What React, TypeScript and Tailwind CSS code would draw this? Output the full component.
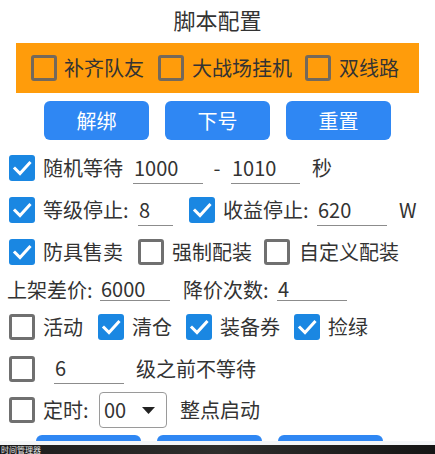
import React from "react";

const FONT = { fontFamily: '"Noto Sans CJK SC", "Noto Sans", sans-serif' };

function Box({ checked = false, orange = false, className = "" }: { checked?: boolean; orange?: boolean; className?: string }) {
  if (checked) {
    return (
      <div className={`w-[26px] h-[26px] rounded-[3px] bg-[#1a87e2] flex items-center justify-center shrink-0 ${className}`}>
        <svg width="26" height="26" viewBox="0 0 26 26">
          <path d="M6 13.5 L11 18.5 L20.5 8" stroke="white" strokeWidth="3" fill="none" strokeLinecap="square" />
        </svg>
      </div>
    );
  }
  return (
    <div
      className={`w-[26px] h-[26px] rounded-[3px] border-[3px] shrink-0 ${orange ? "border-[#74695b]" : "border-[#707070]"} ${className}`}
    />
  );
}

function Input({ value, w, h = "h-[32px]" }: { value: string; w: string; h?: string }) {
  return (
    <div className={`${w} ${h} border-b border-[#8c8c8c] flex items-center pl-[1px] text-[20px] text-[#333] shrink-0`}>
      {value}
    </div>
  );
}

function Btn({ label }: { label: string }) {
  return (
    <div className="w-[105px] h-[39px] rounded-[6px] bg-[#2f87f3] text-white text-[20px] flex items-center justify-center shrink-0">
      {label}
    </div>
  );
}

export default function App() {
  return (
    <div className="w-[435px] h-[454px] bg-white overflow-hidden" style={FONT}>
      <div className="h-[441px] overflow-hidden text-[#333] text-[20px] leading-none">
        <div className="h-[43px] flex items-center justify-center pb-[6px] text-[22px] text-[#333]">脚本配置</div>

        <div className="mx-[16px] h-[50px] bg-[#ff9c0b] flex items-center pl-[15px]">
          <Box orange />
          <span className="ml-[7px] w-[94px]">补齐队友</span>
          <Box orange />
          <span className="ml-[8px] w-[113px]">大战场挂机</span>
          <Box orange />
          <span className="ml-[8px]">双线路</span>
        </div>

        <div className="mt-[8px] flex justify-center gap-[16px]">
          <Btn label="解绑" />
          <Btn label="下号" />
          <Btn label="重置" />
        </div>

        <div className="mt-[7px] h-[42px] flex items-center pl-[9px]">
          <Box checked />
          <span className="ml-[8px] w-[90px]">随机等待</span>
          <Input value="1000" w="w-[70px]" />
          <span className="w-[28px] text-center">-</span>
          <Input value="1010" w="w-[69px]" />
          <span className="ml-[12px]">秒</span>
        </div>

        <div className="h-[42px] flex items-center pl-[9px]">
          <Box checked />
          <span className="ml-[8px] w-[95px]">等级停止:</span>
          <Input value="8" w="w-[35px]" />
          <Box checked className="ml-[16px]" />
          <span className="ml-[8px] w-[94px]">收益停止:</span>
          <Input value="620" w="w-[70px]" />
          <span className="ml-[12px]">W</span>
        </div>

        <div className="h-[42px] flex items-center pl-[9px]">
          <Box checked />
          <span className="ml-[8px] w-[95px]">防具售卖</span>
          <Box />
          <span className="ml-[8px] w-[92px]">强制配装</span>
          <Box />
          <span className="ml-[9px]">自定义配装</span>
        </div>

        <div className="h-[33px] flex items-center pl-[7px]">
          <span className="w-[93px]">上架差价:</span>
          <Input value="6000" w="w-[70px]" h="h-[22px]" />
          <span className="ml-[13px] w-[94px]">降价次数:</span>
          <Input value="4" w="w-[70px]" h="h-[22px]" />
        </div>

        <div className="h-[42px] flex items-center pl-[9px]">
          <Box />
          <span className="ml-[8px] w-[55px]">活动</span>
          <Box checked />
          <span className="ml-[8px] w-[54px]">清仓</span>
          <Box checked />
          <span className="ml-[8px] w-[74px]">装备券</span>
          <Box checked />
          <span className="ml-[8px]">捡绿</span>
        </div>

        <div className="h-[41px] flex items-center pl-[9px]">
          <Box />
          <div className="ml-[19px]">
            <Input value="6" w="w-[70px]" h="h-[30px]" />
          </div>
          <span className="ml-[12px]">级之前不等待</span>
        </div>

        <div className="h-[42px] flex items-center pl-[9px]">
          <Box />
          <span className="ml-[8px] w-[56px]">定时:</span>
          <div className="w-[68px] h-[36px] border border-[#9a9a9a] rounded-[4px] flex items-center pl-[4px] shrink-0">
            <span>00</span>
            <svg className="ml-[16px]" width="13" height="7" viewBox="0 0 13 7">
              <path d="M0 0 L13 0 L6.5 7 Z" fill="#222" />
            </svg>
          </div>
          <span className="ml-[13px]">整点启动</span>
        </div>

        <div className="mt-[4px] flex gap-[16px] pl-[36px]">
          <Btn label="" />
          <Btn label="" />
          <Btn label="" />
        </div>
      </div>
      <div className="h-[4px] bg-[#f4f6f8]" />
      <div className="h-[9px] flex items-center bg-gradient-to-r from-[#1c1c1c] via-[#2e2e2c] to-[#151515]">
        <span className="pl-[1px] text-[8px] leading-[9px] text-[#e6e6e6]">时间管理器</span>
      </div>
    </div>
  );
}
